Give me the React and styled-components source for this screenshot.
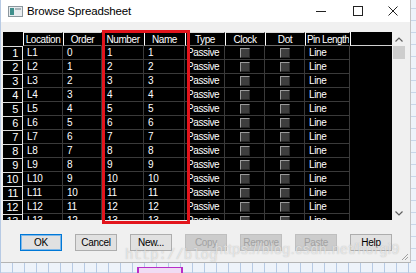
import React from "react"
import styled, { createGlobalStyle, css } from "styled-components"

const GlobalStyle = createGlobalStyle`
  html, body {
    margin: 0;
    padding: 0;
  }
  body {
    width: 416px;
    height: 273px;
    overflow: hidden;
    background-color: #eef3fa;
    background-image:
      repeating-linear-gradient(90deg, #b7cae4 0 1px, transparent 1px 12px),
      repeating-linear-gradient(0deg, #c9d7ea 0 1px, transparent 1px 12px);
    font-family: "Liberation Sans", Arial, sans-serif;
  }
`

const Desktop = styled.div`
  padding-left: 1px;
`

const Window = styled.div`
  position: relative;
  box-sizing: border-box;
  width: 410px;
  height: 263px;
  display: flex;
  flex-direction: column;
  background: #f0f0f0;
  border-right: 1px solid #c4c4c4;
  border-bottom: 1px solid #b4b4b4;
`

const TitleBar = styled.div`
  height: 22px;
  flex: none;
  display: flex;
  align-items: center;
  background: #fff;
  padding-left: 7px;
`

const Title = styled.span`
  margin-left: 4px;
  font-size: 11.5px;
  letter-spacing: -0.15px;
  color: #000;
`

const Caption = styled.div`
  margin-left: auto;
  display: flex;
  height: 100%;
`

const CaptionButton = styled.div`
  width: ${p => p.$w || 37}px;
  display: flex;
  align-items: center;
  justify-content: center;
`

const Body = styled.div`
  flex: 1;
  padding: 10px 4px 0 2px;
  display: flex;
  flex-direction: column;
`

const GridFrame = styled.div`
  position: relative;
  height: 188px;
  display: flex;
  background: #000;
`

const Sheet = styled.div`
  flex: 1;
  overflow: hidden;
  display: grid;
  grid-template-columns: 20px 40px 39px 42px 41px 40px 40px 40px 45px 1fr;
  grid-auto-rows: 14px;
  align-content: start;
  font-size: 10px;
  letter-spacing: -0.4px;
  color: #fff;
`

const cellBase = css`
  box-sizing: border-box;
  display: flex;
  align-items: center;
  white-space: nowrap;
  overflow: hidden;
  line-height: 13px;
`

const Corner = styled.div`
  ${cellBase};
`

const HeadCell = styled.div`
  ${cellBase};
  justify-content: ${p => (p.$left ? "flex-start" : "center")};
  padding: ${p => (p.$left ? "0 0 0 1px" : "0")};
  letter-spacing: ${p => (p.$left ? "-0.55px" : "-0.4px")};
  border-left: 1px solid #fff;
  border-top: 1px solid #d8d8d8;
  border-right: 1px solid #000;
  border-bottom: 1px solid #6a6a6a;
`

const FillerHead = styled.div`
  ${cellBase};
  border-left: 1px solid #fff;
  border-bottom: 1px solid #d0d0d0;
`

const RowHead = styled.div`
  ${cellBase};
  justify-content: flex-end;
  padding-right: 4px;
  font-size: 11px;
  border-top: 1px solid #dcdcdc;
  border-right: 1px solid #e6e6e6;
`

const Cell = styled.div`
  ${cellBase};
  justify-content: ${p => (p.$center ? "center" : "flex-start")};
  padding-left: ${p => (p.$center ? 0 : p.$pad || 4)}px;
  border-right: 1px solid #3a3a3a;
  border-bottom: 1px solid #3a3a3a;
`

const Filler = styled.div``

const CheckBox = styled.span`
  box-sizing: border-box;
  width: 10px;
  height: 10px;
  background: #3e3e3e;
  border-top: 1px solid #9a9a9a;
  border-left: 1px solid #9a9a9a;
  border-right: 1px solid #262626;
  border-bottom: 1px solid #262626;
`

const ScrollBar = styled.div`
  width: 14px;
  flex: none;
  display: flex;
  flex-direction: column;
  background: #f0f0f0;
`

const ScrollArrow = styled.div`
  height: 14px;
  flex: none;
  display: flex;
  align-items: center;
  justify-content: center;
`

const Thumb = styled.div`
  height: 13px;
  margin: 0 1px;
  background: #cdcdcd;
`

const Track = styled.div`
  flex: 1;
`

const RedMark = styled.div`
  position: absolute;
  left: 99px;
  top: -2px;
  width: 88px;
  height: 194px;
  box-sizing: border-box;
  border: 3px solid #e2141c;
  pointer-events: none;
`

const ButtonRow = styled.div`
  display: flex;
  gap: 13px;
  margin-top: 14px;
  padding-left: 17px;
`

const Button = styled.div`
  box-sizing: border-box;
  width: 42px;
  height: 17px;
  display: flex;
  align-items: center;
  justify-content: center;
  font-size: 10px;
  letter-spacing: -0.3px;
  color: #000;
  background: #e1e1e1;
  border: 1px solid #adadad;

  ${p =>
    p.$primary &&
    css`
      border-color: #0078d7;
      box-shadow: inset 0 0 0 1px #7fb8e8;
    `}

  ${p =>
    p.$disabled &&
    css`
      color: #a2a2a2;
      background: #cccccc;
      border-color: #bfbfbf;
    `}
`

const Watermark = styled.div`
  position: absolute;
  left: ${p => p.$x}px;
  top: ${p => p.$y}px;
  font-family: ${p => (p.$mono ? '"Liberation Mono", monospace' : '"Liberation Sans", Arial, sans-serif')};
  font-size: ${p => p.$size}px;
  letter-spacing: ${p => p.$ls || 0}px;
  color: rgba(255, 255, 255, 0.6);
  text-shadow: 0 0 1px rgba(120, 120, 120, 0.5);
  white-space: nowrap;
  pointer-events: none;
`

const Grip = styled.svg`
  position: absolute;
  right: 1px;
  bottom: 1px;
`

const Strip = styled.div`
  height: 10px;
  display: flex;
`

const PurpleBlock = styled.div`
  margin-left: 136px;
  margin-top: 4px;
  width: 42px;
  height: 6px;
  background: #f0dcf3;
  border-top: 1px solid #b82ec8;
  border-left: 2px solid #b82ec8;
  border-right: 2px solid #b82ec8;
`

const headers = ["Location", "Order", "Number", "Name", "Type", "Clock", "Dot", "Pin Length"]
const rows = Array.from({ length: 13 }, (_, i) => i + 1)

const AppIcon = () => (
  <svg width="15" height="11" viewBox="0 0 15 11">
    <rect x="0.5" y="0.5" width="14" height="10" fill="#e8ecef" stroke="#8c979e" />
    <rect x="2" y="2" width="4" height="7" fill="#3f8f8c" />
    <rect x="7" y="2" width="6" height="2" fill="#a9b4ba" />
  </svg>
)

const App = () => (
  <>
    <GlobalStyle />
    <Desktop>
      <Window>
        <TitleBar>
          <AppIcon />
          <Title>Browse Spreadsheet</Title>
          <Caption>
            <CaptionButton>
              <svg width="10" height="10" viewBox="0 0 10 10">
                <line x1="0" y1="5.5" x2="10" y2="5.5" stroke="#222" strokeWidth="1" />
              </svg>
            </CaptionButton>
            <CaptionButton>
              <svg width="10" height="10" viewBox="0 0 10 10">
                <rect x="0.5" y="0.5" width="9" height="9" fill="none" stroke="#222" strokeWidth="1" />
              </svg>
            </CaptionButton>
            <CaptionButton $w={34}>
              <svg width="10" height="10" viewBox="0 0 10 10">
                <path d="M0.5 0.5 L9.5 9.5 M9.5 0.5 L0.5 9.5" stroke="#222" strokeWidth="1" />
              </svg>
            </CaptionButton>
          </Caption>
        </TitleBar>

        <Body>
          <GridFrame>
            <Sheet>
              <Corner />
              {headers.map(h => (
                <HeadCell key={h} $left={h === "Pin Length"}>
                  {h}
                </HeadCell>
              ))}
              <FillerHead />
              {rows.map(n => (
                <React.Fragment key={n}>
                  <RowHead>{n}</RowHead>
                  <Cell>L{n}</Cell>
                  <Cell>{n - 1}</Cell>
                  <Cell $pad={5}>{n}</Cell>
                  <Cell>{n}</Cell>
                  <Cell $pad={2}>Passive</Cell>
                  <Cell $center>
                    <CheckBox />
                  </Cell>
                  <Cell $center>
                    <CheckBox />
                  </Cell>
                  <Cell>Line</Cell>
                  <Filler />
                </React.Fragment>
              ))}
            </Sheet>
            <ScrollBar>
              <ScrollArrow>
                <svg width="8" height="5" viewBox="0 0 8 5">
                  <path d="M0.5 4.5 L4 1 L7.5 4.5" fill="none" stroke="#606060" strokeWidth="1.2" />
                </svg>
              </ScrollArrow>
              <Thumb />
              <Track />
              <ScrollArrow>
                <svg width="8" height="5" viewBox="0 0 8 5">
                  <path d="M0.5 0.5 L4 4 L7.5 0.5" fill="none" stroke="#606060" strokeWidth="1.2" />
                </svg>
              </ScrollArrow>
            </ScrollBar>
            <RedMark />
          </GridFrame>

          <ButtonRow>
            <Button $primary>OK</Button>
            <Button>Cancel</Button>
            <Button>New...</Button>
            <Button $disabled>Copy</Button>
            <Button $disabled>Remove</Button>
            <Button $disabled>Paste</Button>
            <Button>Help</Button>
          </ButtonRow>
        </Body>

        <Watermark $mono $x={124} $y={247} $size={14}>
          http://blog
        </Watermark>
        <Watermark $x={214} $y={241} $size={14} $ls={0.6}>
          https://blog.csdn.net/horgi9
        </Watermark>

        <Grip width="9" height="9" viewBox="0 0 9 9">
          <path d="M8 2 L2 8 M8 5 L5 8" stroke="#a0a0a0" strokeWidth="1" />
        </Grip>
      </Window>
      <Strip>
        <PurpleBlock />
      </Strip>
    </Desktop>
  </>
)

export default App
